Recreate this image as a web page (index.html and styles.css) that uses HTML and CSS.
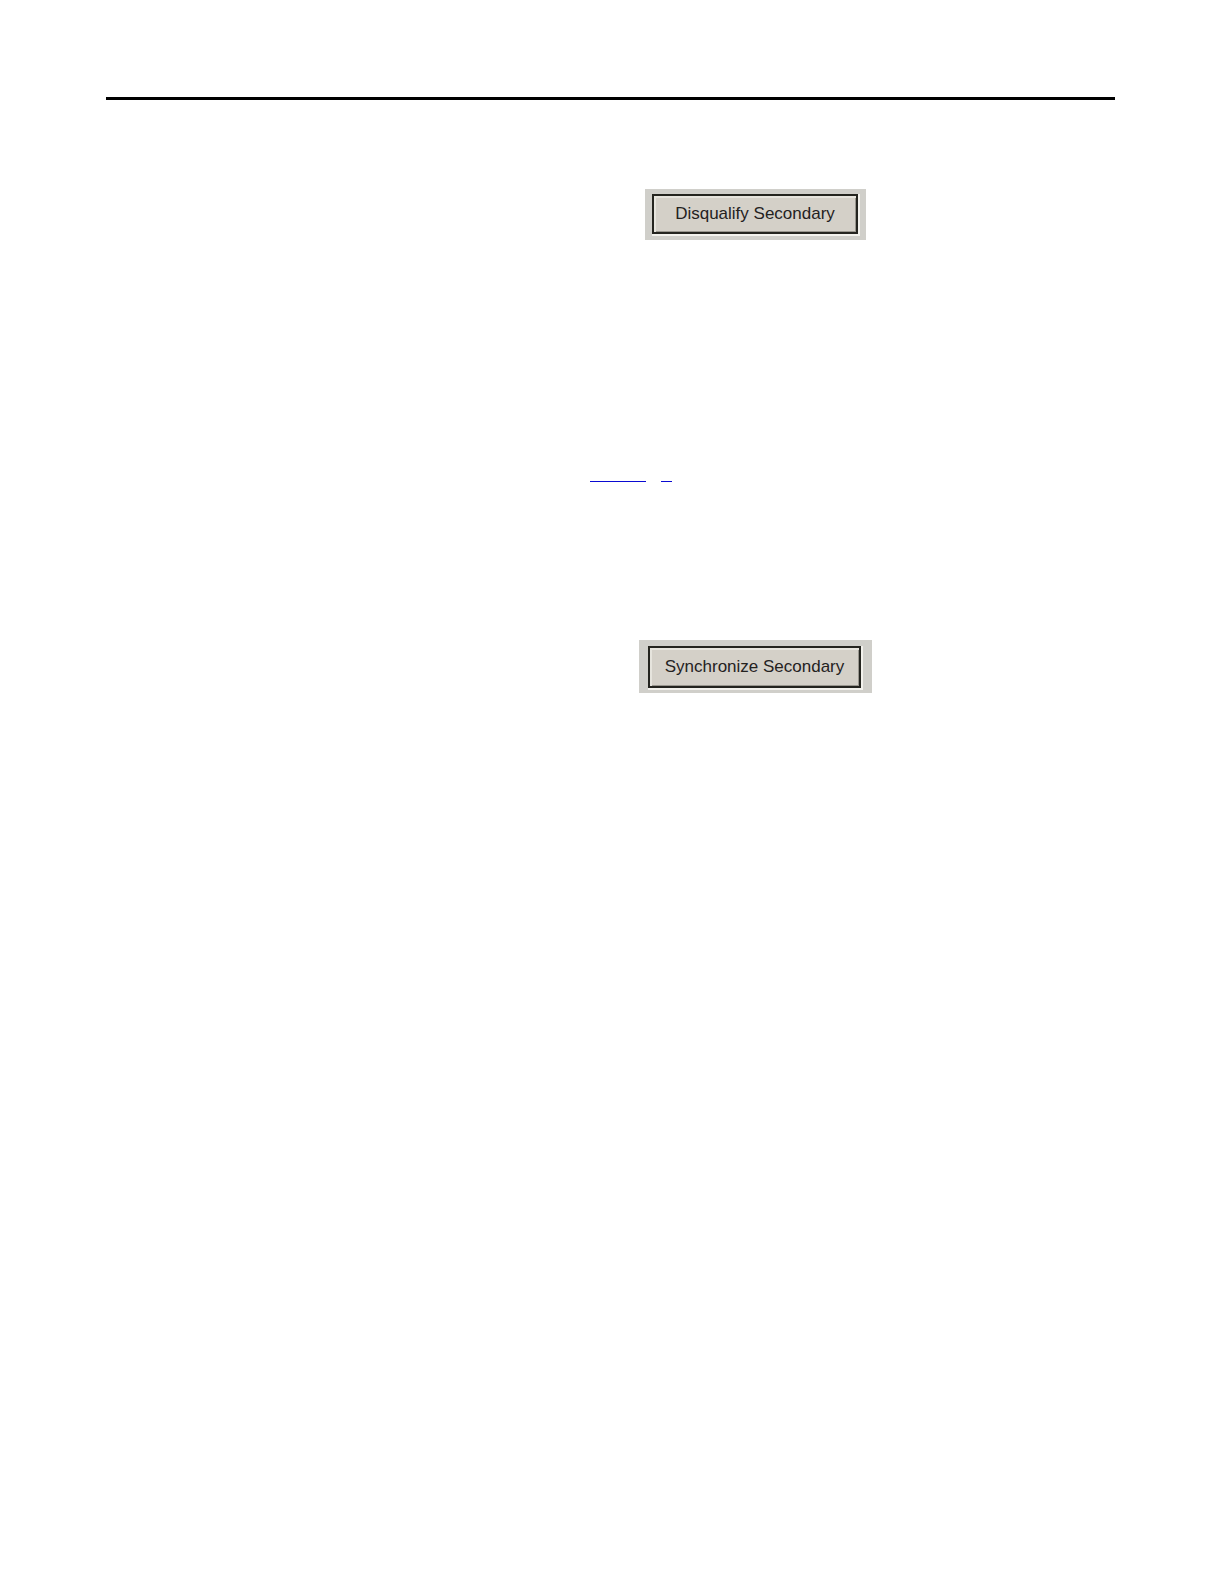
FILE: index.html
```
<!DOCTYPE html>
<html lang="en">

<head>
    <meta charset="utf-8">
    <meta name="viewport" content="width=device-width">
    <title>Secondary</title>
    <link rel="stylesheet" href="styles.css">
</head>

<body>
    <hr class="rule">
    <main class="content">
        <div class="panel disqualify">
            <button type="button" class="btn">Disqualify Secondary</button>
        </div>
        <p class="reference">
            <a class="page-link" href="#synchronize" aria-label="Synchronize Secondary">
                <span class="line"></span>
                <span class="line short"></span>
            </a>
        </p>
        <div class="panel synchronize" id="synchronize">
            <button type="button" class="btn">Synchronize Secondary</button>
        </div>
    </main>
</body>

</html>
```

FILE: styles.css
```
body {
    margin: 0;
    padding: 97px 109px 0 106px;
    background: #fff;
    font-family: "Liberation Sans", Arial, sans-serif;
}

.rule {
    height: 3px;
    margin: 0;
    border: none;
    background: #000;
}

.content {
    display: flex;
    flex-direction: column;
    align-items: center;
    padding: 89px 0 0 290px;
}

/* grey dialog surface around each button */
.panel {
    background: #d0cfca;
}

.disqualify {
    padding: 5px 8px 6px 7px;
}

.synchronize {
    padding: 6px 11px 5px 9px;
}

.btn {
    display: block;
    padding: 0 21px;
    border: 2px solid #24241f;
    border-radius: 0;
    background: #d4d0c8;
    box-shadow: inset 2px 2px 0 #e6e4dd, inset -1px -1px 0 #99968e, 1px 1px 0 1px #f2f1ec;
    color: #24221f;
    font-family: inherit;
    font-size: 17px;
    line-height: 36px;
    cursor: pointer;
}

.synchronize .btn {
    padding: 0 15px;
    line-height: 38px;
}

.reference {
    align-self: flex-start;
    margin: 241px 0 158px 194px;
}

.page-link {
    display: flex;
    gap: 15px;
}

.line {
    width: 56px;
    height: 1px;
    background: #0a0ad2;
}

.short {
    width: 11px;
}
```
